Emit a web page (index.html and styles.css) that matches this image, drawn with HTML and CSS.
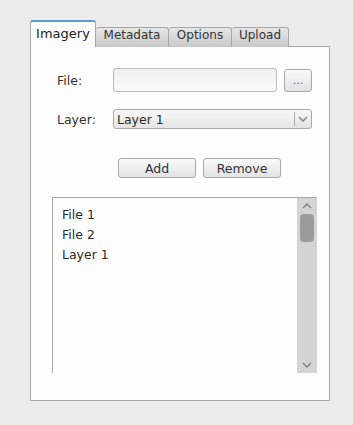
FILE: index.html
```html
<!DOCTYPE html>
<html lang="en">

<head>
    <meta charset="utf-8">
    <meta name="viewport" content="width=device-width, initial-scale=1.0">
    <title>Imagery</title>
    <link rel="stylesheet" href="styles.css">
</head>

<body>
    <div class="vindue">
        <div class="faner">
            <div class="fane aktiv">Imagery</div>
            <div class="fane">Metadata</div>
            <div class="fane">Options</div>
            <div class="fane">Upload</div>
        </div>
        <div class="panel">
            <div class="raekke">
                <span class="etiket">File:</span>
                <div class="felt"></div>
                <button class="knap lille">...</button>
            </div>
            <div class="raekke anden">
                <span class="etiket">Layer:</span>
                <div class="vaelger">
                    <span class="valgt-tekst">Layer 1</span>
                    <span class="pil">
                        <svg width="10" height="6" viewBox="0 0 10 6">
                            <path d="M1 1 L5 5 L9 1" fill="none" stroke="#8a8a8a" stroke-width="1.6"/>
                        </svg>
                    </span>
                </div>
            </div>
            <div class="knapper">
                <button class="knap">Add</button>
                <button class="knap">Remove</button>
            </div>
            <div class="liste">
                <div class="punkter">
                    <div>File 1</div>
                    <div>File 2</div>
                    <div>Layer 1</div>
                </div>
                <div class="rullebjaelke">
                    <svg width="10" height="6" viewBox="0 0 10 6">
                        <path d="M1 5 L5 1 L9 5" fill="none" stroke="#8a8a8a" stroke-width="1.6"/>
                    </svg>
                    <div class="greb"></div>
                    <div class="fyld"></div>
                    <svg width="10" height="6" viewBox="0 0 10 6">
                        <path d="M1 1 L5 5 L9 1" fill="none" stroke="#8a8a8a" stroke-width="1.6"/>
                    </svg>
                </div>
            </div>
        </div>
    </div>
</body>

</html>
```

FILE: styles.css
```css
body {
    margin: 0;
    background-color: #ececec;
    font-family: "DejaVu Sans", sans-serif;
    font-size: 12px;
    color: #2a2a2a;
}

.vindue {
    padding: 20px 0 0 30px;
    width: 300px;
}

/* FANER */

.faner {
    display: flex;
    align-items: flex-end;
    position: relative;
    z-index: 1;
    margin-bottom: -1px;
}

.fane {
    box-sizing: border-box;
    height: 20px;
    padding-top: 1px;
    line-height: 13px;
    text-align: center;
    border: 1px solid #a6a6a6;
    border-bottom: none;
    border-left: none;
    border-radius: 3px 3px 0 0;
    background: linear-gradient(#e6e6e6, #c9c9c9);
    color: #333;
}

.fane:nth-child(2) {
    width: 73px;
}

.fane:nth-child(3) {
    width: 63px;
}

.fane:nth-child(4) {
    width: 57px;
}

.fane.aktiv {
    width: 66px;
    height: 27px;
    padding-top: 4px;
    line-height: 15px;
    border-left: 1px solid #a6a6a6;
    border-top: 2px solid #5a9ad6;
    background: #fdfdfd;
    font-size: 13px;
    color: #222;
}

.panel {
    box-sizing: border-box;
    height: 355px;
    border: 1px solid #a6a6a6;
    background-color: #fdfdfd;
    padding: 21px 0 0 26px;
}

/* FORMULAR */

.raekke {
    display: flex;
    align-items: center;
    height: 24px;
}

.anden {
    margin-top: 17px;
    height: 20px;
}

.etiket {
    width: 56px;
    font-size: 12.5px;
    color: #333;
}

.felt {
    box-sizing: border-box;
    width: 164px;
    height: 24px;
    border: 1px solid #b9b9b9;
    border-radius: 3px;
    background: linear-gradient(#f0f0f0, #fbfbfb);
}

.knap {
    box-sizing: border-box;
    height: 20px;
    width: 78px;
    padding: 0;
    border: 1px solid #a9a9a9;
    border-radius: 3px;
    background: linear-gradient(#fafafa, #e2e2e2);
    font-family: "DejaVu Sans", sans-serif;
    font-size: 12.5px;
    color: #333;
}

.knap.lille {
    width: 28px;
    height: 23px;
    margin-left: 7px;
    font-size: 11px;
    color: #3c64a0;
}

.vaelger {
    box-sizing: border-box;
    display: flex;
    align-items: center;
    width: 199px;
    height: 20px;
    border: 1px solid #a9a9a9;
    border-radius: 3px;
    background: linear-gradient(#f8f8f8, #e4e4e4);
}

.valgt-tekst {
    flex: 1;
    padding-left: 3px;
    font-size: 12.5px;
}

.pil {
    display: flex;
    align-items: center;
    justify-content: center;
    width: 16px;
    height: 14px;
    border-left: 1px solid #a9a9a9;
}

.knapper {
    display: flex;
    gap: 7px;
    margin-top: 29px;
    padding-left: 61px;
}

/* LISTE */

.liste {
    box-sizing: border-box;
    display: flex;
    width: 265px;
    height: 176px;
    margin-top: 19px;
    margin-left: -5px;
    border: 1px solid #a6a6a6;
    border-bottom: none;
    border-right: none;
    background-color: #fdfdfd;
}

.punkter {
    flex: 1;
    padding: 7px 0 0 9px;
    font-size: 12.5px;
    line-height: 20px;
}

.rullebjaelke {
    display: flex;
    flex-direction: column;
    align-items: center;
    width: 20px;
    background-color: #d4d4d4;
    padding: 5px 0 5px;
    box-sizing: border-box;
}

.greb {
    width: 14px;
    height: 28px;
    margin-top: 5px;
    border-radius: 4px;
    background-color: #9b9b9b;
}

.fyld {
    flex: 1;
}
```
